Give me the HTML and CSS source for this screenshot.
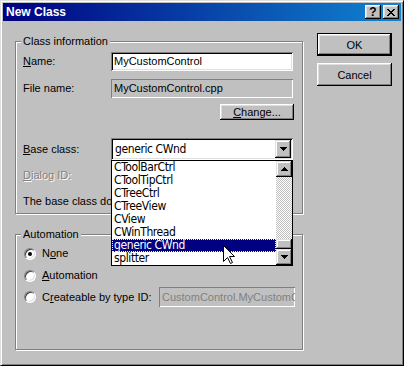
FILE: index.html
```html
<html>
<head>
    <link rel="stylesheet" href="styles.css">
</head>
<body>
    <div class="window">
        <div class="titlebar">
            <span class="title">New Class</span>
            <div class="caption-buttons">
                <button class="cap-btn help">?</button>
                <button class="cap-btn close">
                    <svg width="8" height="7" viewBox="0 0 8 7" shape-rendering="crispEdges">
                        <path d="M0 0h2v1h-2zM6 0h2v1h-2zM1 1h2v1h-2zM5 1h2v1h-2zM2 2h4v1h-4zM3 3h2v1h-2zM2 4h4v1h-4zM1 5h2v1h-2zM5 5h2v1h-2zM0 6h2v1h-2zM6 6h2v1h-2z" fill="#000"/>
                    </svg>
                </button>
            </div>
        </div>

        <div class="dialog">
            <div class="left">
                <fieldset class="group info">
                    <legend>Class information</legend>

                    <div class="field-row row-name">
                        <label><u>N</u>ame:</label>
                        <div class="edit">MyCustomControl</div>
                    </div>

                    <div class="field-row row-file">
                        <label>File name:</label>
                        <div class="edit readonly">MyCustomControl.cpp</div>
                    </div>

                    <div class="field-row row-change">
                        <button class="btn small"><u>C</u>hange...</button>
                    </div>

                    <div class="field-row row-base">
                        <label><u>B</u>ase class:</label>
                        <div class="combo">
                            <span class="combo-text">generic CWnd</span>
                            <span class="combo-btn">
                                <svg width="7" height="4" viewBox="0 0 7 4" shape-rendering="crispEdges">
                                    <path d="M0 0h7v1h-7zM1 1h5v1h-5zM2 2h3v1h-3zM3 3h1v1h-1z" fill="#000"/>
                                </svg>
                            </span>

                            <div class="dropdown">
                                <ul class="items">
                                    <li>CToolBarCtrl</li>
                                    <li>CToolTipCtrl</li>
                                    <li>CTreeCtrl</li>
                                    <li>CTreeView</li>
                                    <li>CView</li>
                                    <li>CWinThread</li>
                                    <li class="selected">generic CWnd</li>
                                    <li>splitter</li>
                                </ul>
                                <div class="scrollbar">
                                    <span class="sb-btn">
                                        <svg width="7" height="4" viewBox="0 0 7 4" shape-rendering="crispEdges">
                                            <path d="M3 0h1v1h-1zM2 1h3v1h-3zM1 2h5v1h-5zM0 3h7v1h-7z" fill="#000"/>
                                        </svg>
                                    </span>
                                    <span class="sb-track"></span>
                                    <span class="sb-thumb"></span>
                                    <span class="sb-btn">
                                        <svg width="7" height="4" viewBox="0 0 7 4" shape-rendering="crispEdges">
                                            <path d="M0 0h7v1h-7zM1 1h5v1h-5zM2 2h3v1h-3zM3 3h1v1h-1z" fill="#000"/>
                                        </svg>
                                    </span>
                                </div>
                            </div>
                        </div>
                    </div>

                    <div class="field-row row-dialog">
                        <label class="disabled"><u>D</u>ialog ID:</label>
                    </div>

                    <div class="row-note">The base class does not require a dialog resource.</div>
                </fieldset>

                <fieldset class="group automation">
                    <legend>Automation</legend>

                    <div class="radio-row first">
                        <span class="radio checked"></span>
                        <span>N<u>o</u>ne</span>
                    </div>
                    <div class="radio-row">
                        <span class="radio"></span>
                        <span><u>A</u>utomation</span>
                    </div>
                    <div class="radio-row last">
                        <span class="radio"></span>
                        <span>C<u>r</u>eateable by type ID:</span>
                        <div class="edit disabled-edit">CustomControl.MyCustomControl</div>
                    </div>
                </fieldset>
            </div>

            <div class="right">
                <button class="btn default">OK</button>
                <button class="btn">Cancel</button>
            </div>
        </div>

        <svg class="cursor" width="12" height="19" viewBox="0 0 12 19">
            <polygon points="0.5,0.5 0.5,16.5 4.5,12.5 7.5,18.5 9.5,17.5 6.5,11.5 11.5,11.5" fill="#fff" stroke="#000" stroke-width="1"/>
        </svg>
    </div>
</body>
</html>
```

FILE: styles.css
```css
body {
    margin: 0;
    background-color: #c0c0c0;
    font-family: "Liberation Sans", Arial, sans-serif;
    font-size: 11px;
    line-height: 13px;
    color: #000;
}
.window {
    position: relative;
    width: 404px;
    height: 366px;
    box-sizing: border-box;
    border: 1px solid;
    border-color: #dfdfdf #000 #000 #dfdfdf;
    box-shadow: inset 1px 1px #fff, inset -1px -1px #808080;
    padding: 2px;
    background-color: #c0c0c0;
}
.titlebar {
    height: 18px;
    background: linear-gradient(to right, #000080, #1084d0);
    display: flex;
    align-items: center;
    justify-content: space-between;
    padding: 0 2px 0 3px;
}
.title {
    color: #fff;
    font-weight: bold;
    font-size: 12px;
}
.caption-buttons {
    display: flex;
    gap: 2px;
}
.cap-btn {
    width: 16px;
    height: 14px;
    padding: 0;
    border: none;
    background-color: #c0c0c0;
    box-shadow: inset -1px -1px #000, inset 1px 1px #fff, inset -2px -2px #808080, inset 2px 2px #dfdfdf;
    display: flex;
    align-items: center;
    justify-content: center;
    font-family: "Liberation Sans", Arial, sans-serif;
    font-weight: bold;
    font-size: 12px;
    line-height: 12px;
}
.cap-btn.close svg {
    margin-left: -1px;
}

.dialog {
    display: flex;
    padding: 12px 0 0 12px;
}
.left {
    width: 288px;
    display: flex;
    flex-direction: column;
    margin-top: 2px;
}
.right {
    margin-left: 14px;
    display: flex;
    flex-direction: column;
    gap: 7px;
}

.btn {
    width: 75px;
    height: 23px;
    padding: 0;
    border: none;
    background-color: #c0c0c0;
    box-shadow: inset -1px -1px #000, inset 1px 1px #fff, inset -2px -2px #808080, inset 2px 2px #dfdfdf;
    font-family: "Liberation Sans", Arial, sans-serif;
    font-size: 11px;
    color: #000;
}
.btn.default {
    box-shadow: inset 0 0 0 1px #000, inset -2px -2px #000, inset 2px 2px #fff, inset -3px -3px #808080, inset 3px 3px #dfdfdf;
}
.btn.small {
    width: 74px;
    height: 16px;
    line-height: 12px;
}

.group {
    margin: 0;
    padding: 0 8px 0 7px;
    border: 1px solid #808080;
    box-shadow: 1px 1px #fff, inset 1px 1px #fff;
    box-sizing: border-box;
    min-width: 0;
}
.group legend {
    padding: 0 2px;
    margin-left: -2px;
    background-color: #c0c0c0;
    line-height: 13px;
}
.info {
    height: 179px;
}
.automation {
    height: 122px;
    margin-top: 14px;
    padding-right: 7px;
}

.field-row {
    display: flex;
    align-items: center;
}
.field-row label {
    width: 88px;
    flex: none;
}
.row-name {
    margin-top: 4px;
}
.row-file {
    margin-top: 8px;
}
.row-change {
    margin-top: 6px;
    justify-content: flex-end;
}
.row-base {
    margin-top: 18px;
}
.row-dialog {
    margin-top: 9px;
}
.row-note {
    margin-top: 13px;
    white-space: nowrap;
    overflow: hidden;
}
.disabled {
    color: #808080;
    text-shadow: 1px 1px #fff;
}

.edit {
    width: 182px;
    height: 19px;
    box-sizing: border-box;
    padding: 0 3px;
    background-color: #fff;
    box-shadow: inset 1px 1px #808080, inset -1px -1px #fff, inset 2px 2px #000, inset -2px -2px #dfdfdf;
    display: flex;
    align-items: center;
    white-space: nowrap;
    overflow: hidden;
}
.edit.readonly {
    background-color: #c0c0c0;
    box-shadow: inset 1px 1px #808080, inset -1px -1px #fff;
}

.combo {
    position: relative;
    width: 182px;
    height: 22px;
    box-sizing: border-box;
    padding: 2px;
    background-color: #fff;
    box-shadow: inset 1px 1px #808080, inset -1px -1px #fff, inset 2px 2px #000, inset -2px -2px #dfdfdf;
    display: flex;
    align-items: center;
}
.combo-text,
.items li {
    font-family: "DejaVu Sans Condensed", "Liberation Sans Narrow", "Liberation Sans", sans-serif;
    font-size: 12px;
    letter-spacing: -0.4px;
}
.combo-text {
    flex: 1;
    padding-left: 2px;
}
.combo-btn,
.sb-btn {
    width: 16px;
    height: 16px;
    flex: none;
    background-color: #c0c0c0;
    box-shadow: inset -1px -1px #000, inset 1px 1px #dfdfdf, inset -2px -2px #808080, inset 2px 2px #fff;
    display: flex;
    align-items: center;
    justify-content: center;
}
.combo-btn {
    height: 18px;
}

.dropdown {
    position: absolute;
    left: 0;
    top: 22px;
    width: 182px;
    height: 106px;
    box-sizing: border-box;
    border: 1px solid #000;
    background-color: #fff;
    display: flex;
    z-index: 2;
}
.items {
    list-style: none;
    margin: 0;
    padding: 0;
    flex: 1;
}
.items li {
    height: 13px;
    line-height: 13px;
    padding-left: 2px;
    white-space: nowrap;
}
.items li.selected {
    background-color: #000080;
    color: #fff;
    outline: 1px dotted #ffff80;
    outline-offset: -1px;
}
.scrollbar {
    width: 16px;
    display: flex;
    flex-direction: column;
}
.sb-track {
    flex: 1;
    background-image: repeating-conic-gradient(#c0c0c0 0 25%, #fff 0 50%);
    background-size: 2px 2px;
}
.sb-thumb {
    height: 10px;
    background-color: #c0c0c0;
    box-shadow: inset -1px -1px #000, inset 1px 1px #dfdfdf, inset -2px -2px #808080, inset 2px 2px #fff;
}

.radio-row {
    display: flex;
    align-items: center;
    height: 13px;
    margin-top: 9px;
}
.radio-row.first {
    margin-top: 6px;
}
.radio-row.last {
    margin-top: 5px;
    height: 20px;
}
.radio {
    position: relative;
    width: 12px;
    height: 12px;
    box-sizing: border-box;
    margin: 0 6px 0 1px;
    border-radius: 50%;
    border: 1px solid;
    border-color: #808080 #fff #fff #808080;
    background-color: #fff;
    box-shadow: inset 1px 1px #404040, inset -1px -1px #dfdfdf;
    flex: none;
}
.radio.checked::after {
    content: "";
    position: absolute;
    left: 3px;
    top: 3px;
    width: 4px;
    height: 4px;
    border-radius: 50%;
    background-color: #000;
}
.disabled-edit {
    width: 136px;
    height: 20px;
    margin-left: auto;
    background-color: #c0c0c0;
    color: #808080;
    box-shadow: inset 1px 1px #808080, inset -1px -1px #fff;
}

.cursor {
    position: absolute;
    left: 222px;
    top: 244px;
    z-index: 5;
}
```
